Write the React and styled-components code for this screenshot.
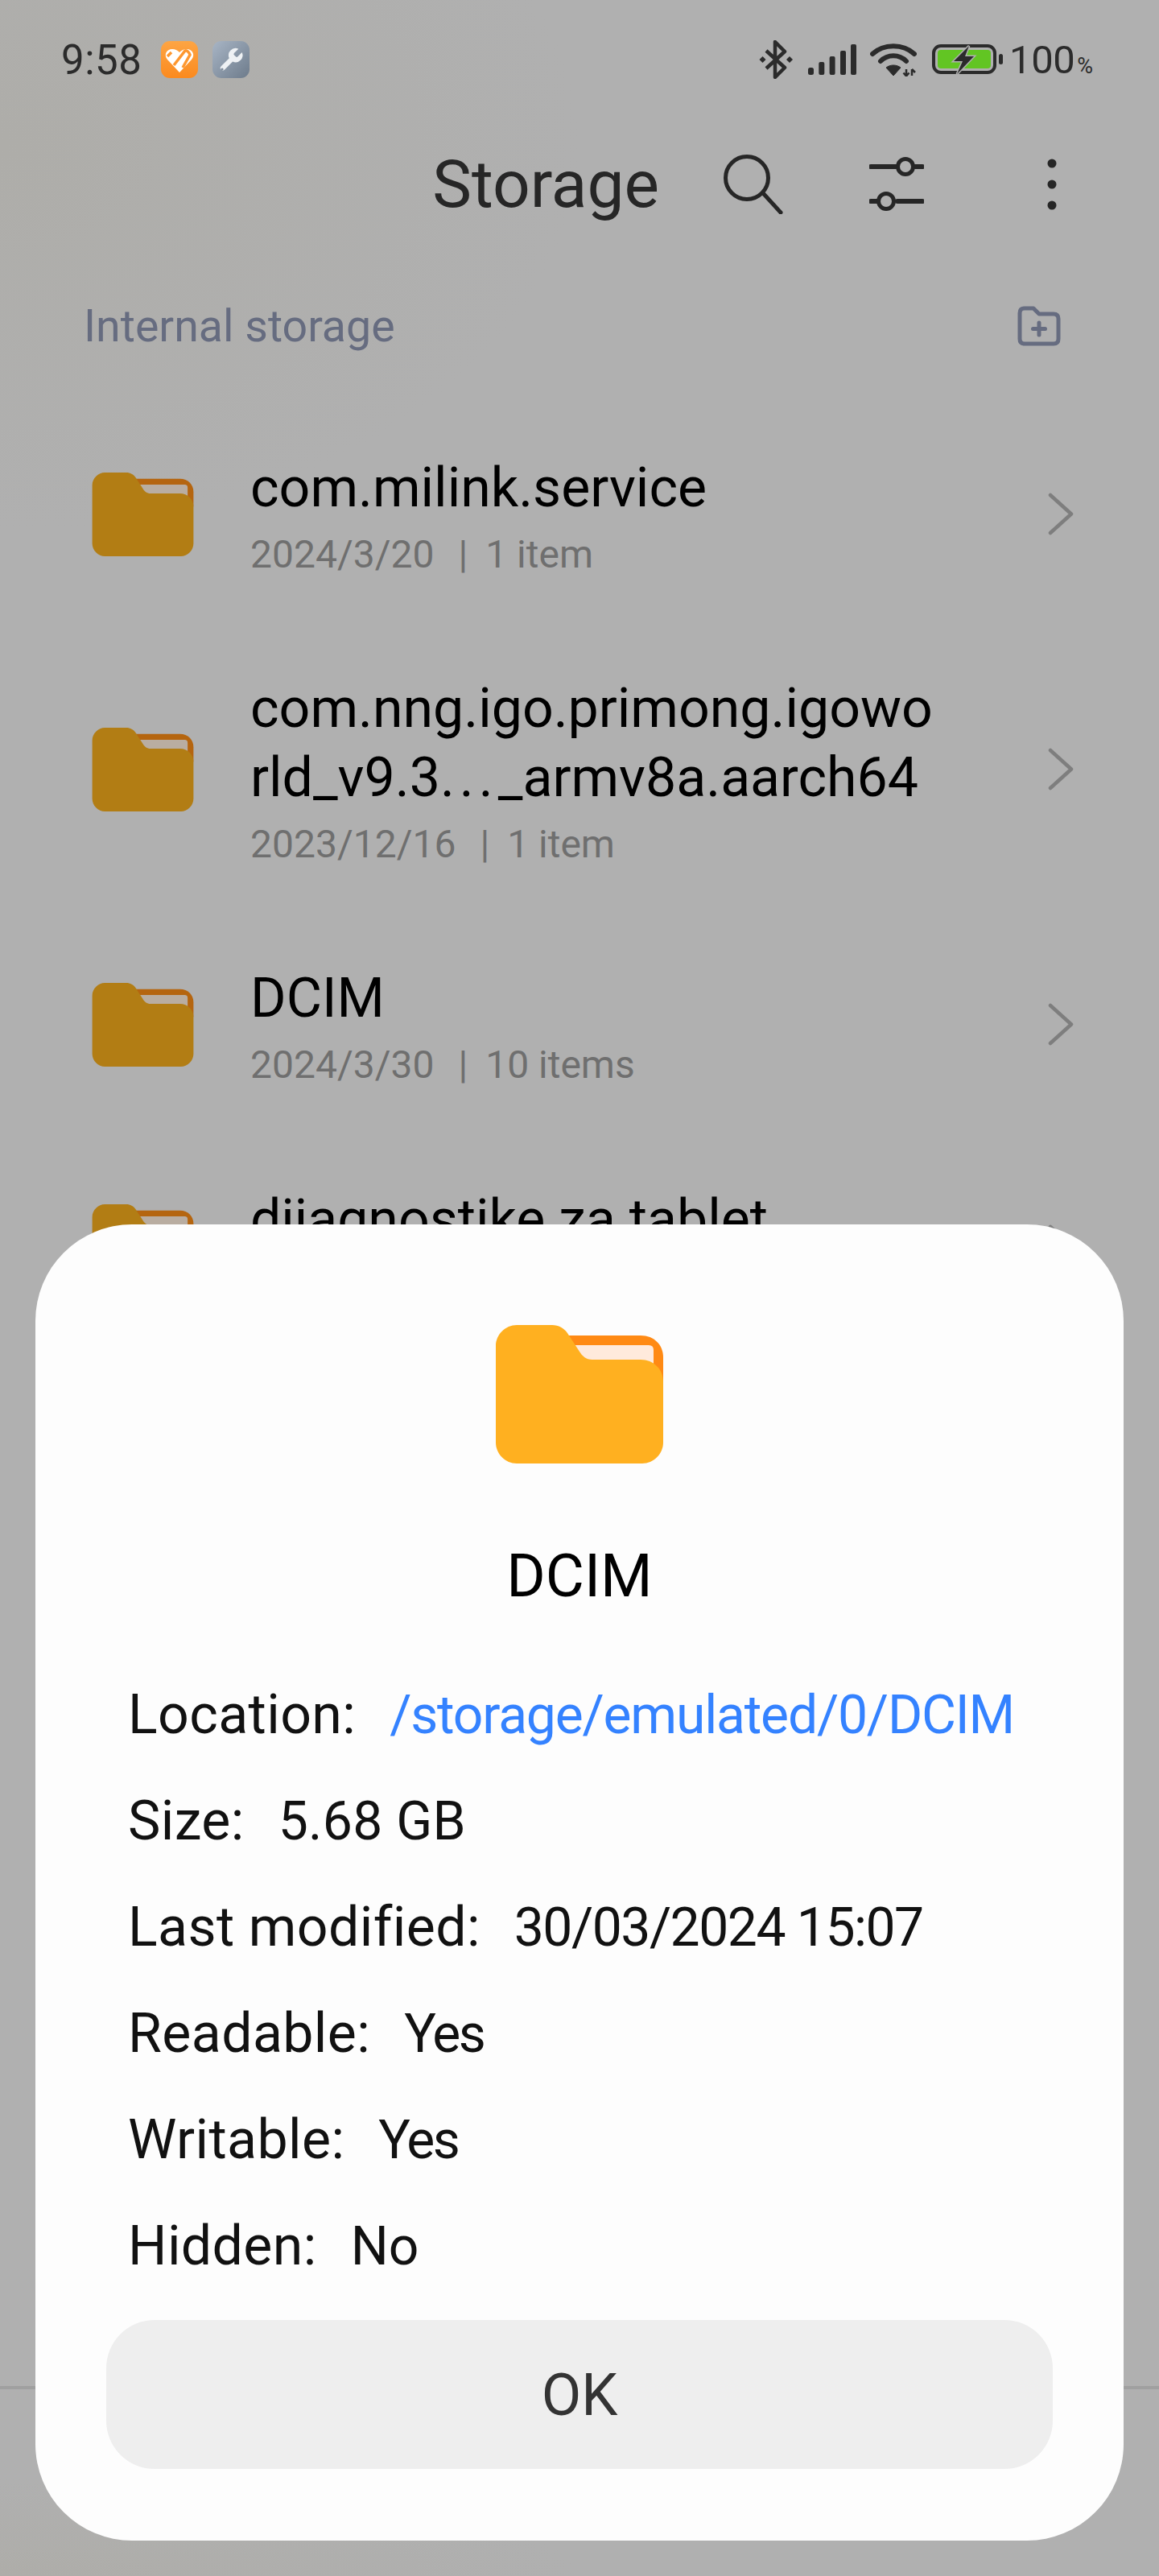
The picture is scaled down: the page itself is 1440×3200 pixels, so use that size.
import React from 'react';
import styled, { createGlobalStyle } from 'styled-components';

const GlobalStyle = createGlobalStyle`
  html, body { margin: 0; padding: 0; background: #b0b0b0; }
  * { box-sizing: border-box; }
`;

const Page = styled.div`
  position: relative;
  width: 1440px;
  height: 3200px;
  overflow: hidden;
  display: flex;
  flex-direction: column;
  background:
    radial-gradient(ellipse 720px 480px at 0 180px, #aeada9, rgba(174, 173, 169, 0)),
    radial-gradient(ellipse 720px 120px at 0 3200px, #aeada9, rgba(174, 173, 169, 0)),
    #b0b0b0;
  font-family: Roboto, "Noto Sans", sans-serif;
`;

const StatusBar = styled.div`
  height: 144px;
  padding: 4px 82px 0 76px;
  display: flex;
  align-items: center;
  color: #2b2b2b;
`;

const Time = styled.span`
  font-size: 51px;
  width: 124px;
  letter-spacing: 0.5px;
`;

const AppIcon = styled.svg`
  width: 46px;
  height: 46px;
  margin-right: 18px;
`;

const StatusRight = styled.div`
  margin-left: auto;
  display: flex;
  align-items: center;
`;

const StatusGlyph = styled.svg`
  display: block;
  margin-left: ${p => p.$gap || 0}px;
`;

const Battery = styled.span`
  font-size: 49px;
  margin-left: 8px;
  letter-spacing: -0.5px;
`;

const Percent = styled.span`
  font-size: 27px;
  margin-left: 3px;
  align-self: flex-end;
  padding-bottom: 5px;
`;

const Header = styled.div`
  height: 170px;
  padding-right: 127px;
  display: flex;
  align-items: center;
  justify-content: flex-end;
  color: #262626;
`;

const Title = styled.h1`
  margin: 0;
  font-size: 82px;
  font-weight: 400;
`;

const HeaderIcon = styled.svg`
  display: block;
  margin-left: ${p => p.$gap}px;
`;

const Breadcrumb = styled.div`
  height: 180px;
  padding: 2px 122px 0 104px;
  display: flex;
  align-items: center;
  justify-content: space-between;
  color: #666c80;
`;

const Crumb = styled.span`
  font-size: 55.5px;
`;

const List = styled.div`
  flex: 1;
  padding-top: 7px;
  overflow: hidden;
`;

const Row = styled.div`
  height: ${p => (p.$tall ? 359 : 275)}px;
  padding: 0 106px 0 114px;
  display: flex;
  align-items: center;
`;

const RowText = styled.div`
  flex: 1;
  margin-left: 70px;
  padding-top: 14px;
`;

const RowTitle = styled.div`
  font-size: 68px;
  line-height: 86px;
  color: #000;
  white-space: nowrap;
`;

const Dots = styled.span`
  letter-spacing: 6px;
`;

const RowSub = styled.div`
  font-size: 48px;
  line-height: 80px;
  color: #6f6f6f;
`;

const Sep = styled.span`
  margin: 0 22px 0 30px;
`;

const BottomBar = styled.div`
  height: 236px;
  flex-shrink: 0;
  border-top: 4px solid #a0a0a0;
`;

const Dialog = styled.div`
  position: absolute;
  left: 44px;
  right: 44px;
  bottom: 44px;
  height: 1635px;
  padding: 125px 88px 89px;
  background: #fdfdfd;
  border-radius: 120px;
  display: flex;
  flex-direction: column;
`;

const DialogFolder = styled.div`
  display: flex;
  justify-content: center;
`;

const DialogTitle = styled.div`
  margin-top: 96px;
  text-align: center;
  font-size: 74px;
  line-height: 88px;
  color: #000;
`;

const Details = styled.div`
  margin-top: 62px;
  padding-left: 27px;
  flex: 1;
`;

const DetailRow = styled.div`
  height: 132px;
  display: flex;
  align-items: center;
  gap: 42px;
  color: #111;
  white-space: nowrap;
`;

const Label = styled.span`
  font-size: 68px;
  letter-spacing: 0.4px;
`;

const Value = styled.span`
  font-size: 66px;
  letter-spacing: ${p => p.$track || 0}px;
  color: ${p => p.$color || 'inherit'};
`;

const OkButton = styled.button`
  height: 185px;
  border: 0;
  border-radius: 60px;
  background: #eeeeee;
  color: #333;
  font: inherit;
  font-size: 72px;
  padding: 2px 0 0;
`;

const bright = { front: '#ffb020', back: '#ff8a14', paper: '#ffeadc' };
const dim = { front: '#b27d14', back: '#b5650f', paper: '#b9ada1' };

function Folder({ w, h, c }) {
  return (
    <svg width={w} height={h} viewBox="0 0 208 172" style={{ flexShrink: 0, display: 'block' }}>
      <path d="M80 13H180C197 13 208 25 208 40V70H100Z" fill={c.back} />
      <path d="M88 25H190Q196 25 196 31V52H112Z" fill={c.paper} />
      <path
        d="M26 0H70C78 0 85 4 89 10L104 33C107 38 112 43 120 43H180C196 43 208 55 208 70V146C208 160 196 172 182 172H26C12 172 0 160 0 146V26C0 12 12 0 26 0Z"
        fill={c.front}
      />
    </svg>
  );
}

function Chevron() {
  return (
    <svg width="32" height="53" viewBox="0 0 32 53" style={{ flexShrink: 0 }}>
      <path d="M3 3L29 26.5L3 50" fill="none" stroke="#7e7e7e" strokeWidth="4.5" strokeLinecap="round" strokeLinejoin="round" />
    </svg>
  );
}

const rows = [
  { title: ['com.milink.service'], date: '2024/3/20', count: '1 item' },
  {
    title: ['com.nng.igo.primong.igowo', <>rld_v9.3<Dots>...</Dots>_armv8a.aarch64</>],
    date: '2023/12/16',
    count: '1 item',
  },
  { title: ['DCIM'], date: '2024/3/30', count: '10 items' },
  { title: ['dijagnostike za tablet'], date: '2024/1/12', count: '2 items' },
];

const details = [
  { label: 'Location:', value: '/storage/emulated/0/DCIM', track: -1.2, color: '#3482ff' },
  { label: 'Size:', value: '5.68 GB', track: 0.3 },
  { label: 'Last modified:', value: '30/03/2024 15:07', track: -1.5 },
  { label: 'Readable:', value: 'Yes', track: -2.5 },
  { label: 'Writable:', value: 'Yes', track: -2.5 },
  { label: 'Hidden:', value: 'No' },
];

export default function App() {
  return (
    <Page>
      <GlobalStyle />
      <StatusBar>
        <Time>9:58</Time>
        <AppIcon viewBox="0 0 46 46">
          <defs>
            <linearGradient id="org" x1="0" y1="0" x2="0" y2="1">
              <stop offset="0" stopColor="#fda544" />
              <stop offset="1" stopColor="#fb8a1e" />
            </linearGradient>
          </defs>
          <rect width="46" height="46" rx="11" fill="url(#org)" />
          <path d="M23 39L8 23C3 17 7 10 14 10C18 10 21 12 23 14C25 12 28 10 32 10C39 10 43 17 38 23Z" fill="#fff" />
          <path d="M16 30L30 12C32 11 35 14 36 17L27 33M8 19L13 14" fill="none" stroke="#fd9730" strokeWidth="3.5" />
        </AppIcon>
        <AppIcon viewBox="0 0 46 46">
          <defs>
            <linearGradient id="gry" x1="0" y1="0" x2="1" y2="1">
              <stop offset="0" stopColor="#a8b5c5" />
              <stop offset="1" stopColor="#6d7b8b" />
            </linearGradient>
          </defs>
          <rect width="46" height="46" rx="11" fill="url(#gry)" />
          <g transform="translate(5.5 6) scale(1.45)">
            <path
              d="M14.7 6.3a1 1 0 0 0 0 1.4l1.6 1.6a1 1 0 0 0 1.4 0l3.77-3.77a6 6 0 0 1-7.94 7.94l-6.91 6.91a2.12 2.12 0 0 1-3-3l6.91-6.91a6 6 0 0 1 7.94-7.94l-3.76 3.76z"
              fill="#eef1f4"
            />
          </g>
          <circle cx="12" cy="35" r="1.6" fill="#7f8c9b" />
        </AppIcon>
        <StatusRight>
          <StatusGlyph width="43" height="48" viewBox="0 0 43 48">
            <path d="M9 13L32 34L20 46V2L32 14L9 35" fill="none" stroke="#2b2b2b" strokeWidth="4.5" strokeLinejoin="round" />
            <path d="M4.500 20L8.500 24L4.500 28L0.500 24ZM38 20L42 24L38 28L34 24Z" fill="#2b2b2b" />
          </StatusGlyph>
          <StatusGlyph $gap={18} width="60" height="38" viewBox="0 0 60 38">
            <rect x="0" y="29" width="7" height="9" rx="2.500" fill="#2b2b2b" />
            <rect x="13.300" y="22" width="7" height="16" rx="2" fill="#2b2b2b" />
            <rect x="26.600" y="15" width="7" height="23" rx="2" fill="#2b2b2b" />
            <rect x="40" y="8" width="7" height="30" rx="2" fill="#2b2b2b" />
            <rect x="53" y="0" width="7" height="38" rx="2" fill="#2b2b2b" />
          </StatusGlyph>
          <StatusGlyph $gap={17} width="58" height="42" viewBox="0 0 58 42">
            <path d="M3 14C17 1 41 1 55 14M13 23C22 14 36 14 45 23" fill="none" stroke="#2b2b2b" strokeWidth="6" strokeLinecap="round" />
            <path d="M20 31C25 27 33 27 38 31L29 41Z" fill="#2b2b2b" stroke="#2b2b2b" strokeWidth="1" strokeLinejoin="round" />
            <path d="M45 33V41M41.500 37.500L45 41.500L48.500 37.500M52 41V33M52 33L56 37" fill="none" stroke="#2b2b2b" strokeWidth="2.500" />
          </StatusGlyph>
          <StatusGlyph $gap={19} width="88" height="38" viewBox="0 0 88 38">
            <rect x="2" y="2" width="76" height="33" rx="9" fill="none" stroke="#2b2b2b" strokeWidth="4" />
            <rect x="7" y="7" width="66" height="23" rx="4" fill="#62c523" />
            <rect x="83" y="12" width="5" height="13" rx="2.500" fill="#2b2b2b" />
            <path d="M46 2L27 21H38L31 37L52 15H41Z" fill="#2b2b2b" stroke="#b0b0b0" strokeWidth="3" paintOrder="stroke" />
          </StatusGlyph>
          <Battery>100</Battery>
          <Percent>%</Percent>
        </StatusRight>
      </StatusBar>

      <Header>
        <Title>Storage</Title>
        <HeaderIcon $gap={80} width="74" height="74" viewBox="0 0 74 74">
          <circle cx="29" cy="29" r="26.500" fill="none" stroke="#262626" strokeWidth="5" />
          <path d="M50 49L71 72" stroke="#262626" strokeWidth="5" strokeLinecap="round" />
        </HeaderIcon>
        <HeaderIcon $gap={107} width="68" height="68" viewBox="0 0 68 68">
          <path d="M2 12H33M57 12H66M2 55H11M35 55H66" stroke="#262626" strokeWidth="6" strokeLinecap="round" />
          <circle cx="45" cy="12" r="9.500" fill="none" stroke="#262626" strokeWidth="5" />
          <circle cx="21" cy="55" r="9.500" fill="none" stroke="#262626" strokeWidth="5" />
        </HeaderIcon>
        <HeaderIcon $gap={153} width="12" height="64" viewBox="0 0 12 64">
          <circle cx="6" cy="6" r="5.500" fill="#262626" />
          <circle cx="6" cy="32" r="5.500" fill="#262626" />
          <circle cx="6" cy="58" r="5.500" fill="#262626" />
        </HeaderIcon>
      </Header>

      <Breadcrumb>
        <Crumb>Internal storage</Crumb>
        <svg width="54" height="50" viewBox="0 0 54 50">
          <path
            d="M3 9C3 5 5 3 9 3H20L27 10H45C49 10 51 12 51 16V41C51 45 49 47 45 47H9C5 47 3 45 3 41Z"
            fill="none"
            stroke="#666c80"
            strokeWidth="5"
            strokeLinejoin="round"
          />
          <path d="M27 21V36M19.500 28.500H34.500" stroke="#666c80" strokeWidth="5" strokeLinecap="round" />
        </svg>
      </Breadcrumb>

      <List>
        {rows.map(row => (
          <Row key={row.date} $tall={row.title.length > 1}>
            <Folder w={127} h={104} c={dim} />
            <RowText>
              {row.title.map((line, i) => (
                <RowTitle key={i}>{line}</RowTitle>
              ))}
              <RowSub>
                {row.date}
                <Sep>|</Sep>
                {row.count}
              </RowSub>
            </RowText>
            <Chevron />
          </Row>
        ))}
      </List>
      <BottomBar />

      <Dialog>
        <DialogFolder>
          <Folder w={208} h={172} c={bright} />
        </DialogFolder>
        <DialogTitle>DCIM</DialogTitle>
        <Details>
          {details.map(item => (
            <DetailRow key={item.label}>
              <Label>{item.label}</Label>
              <Value $track={item.track} $color={item.color}>{item.value}</Value>
            </DetailRow>
          ))}
        </Details>
        <OkButton>OK</OkButton>
      </Dialog>
    </Page>
  );
}
